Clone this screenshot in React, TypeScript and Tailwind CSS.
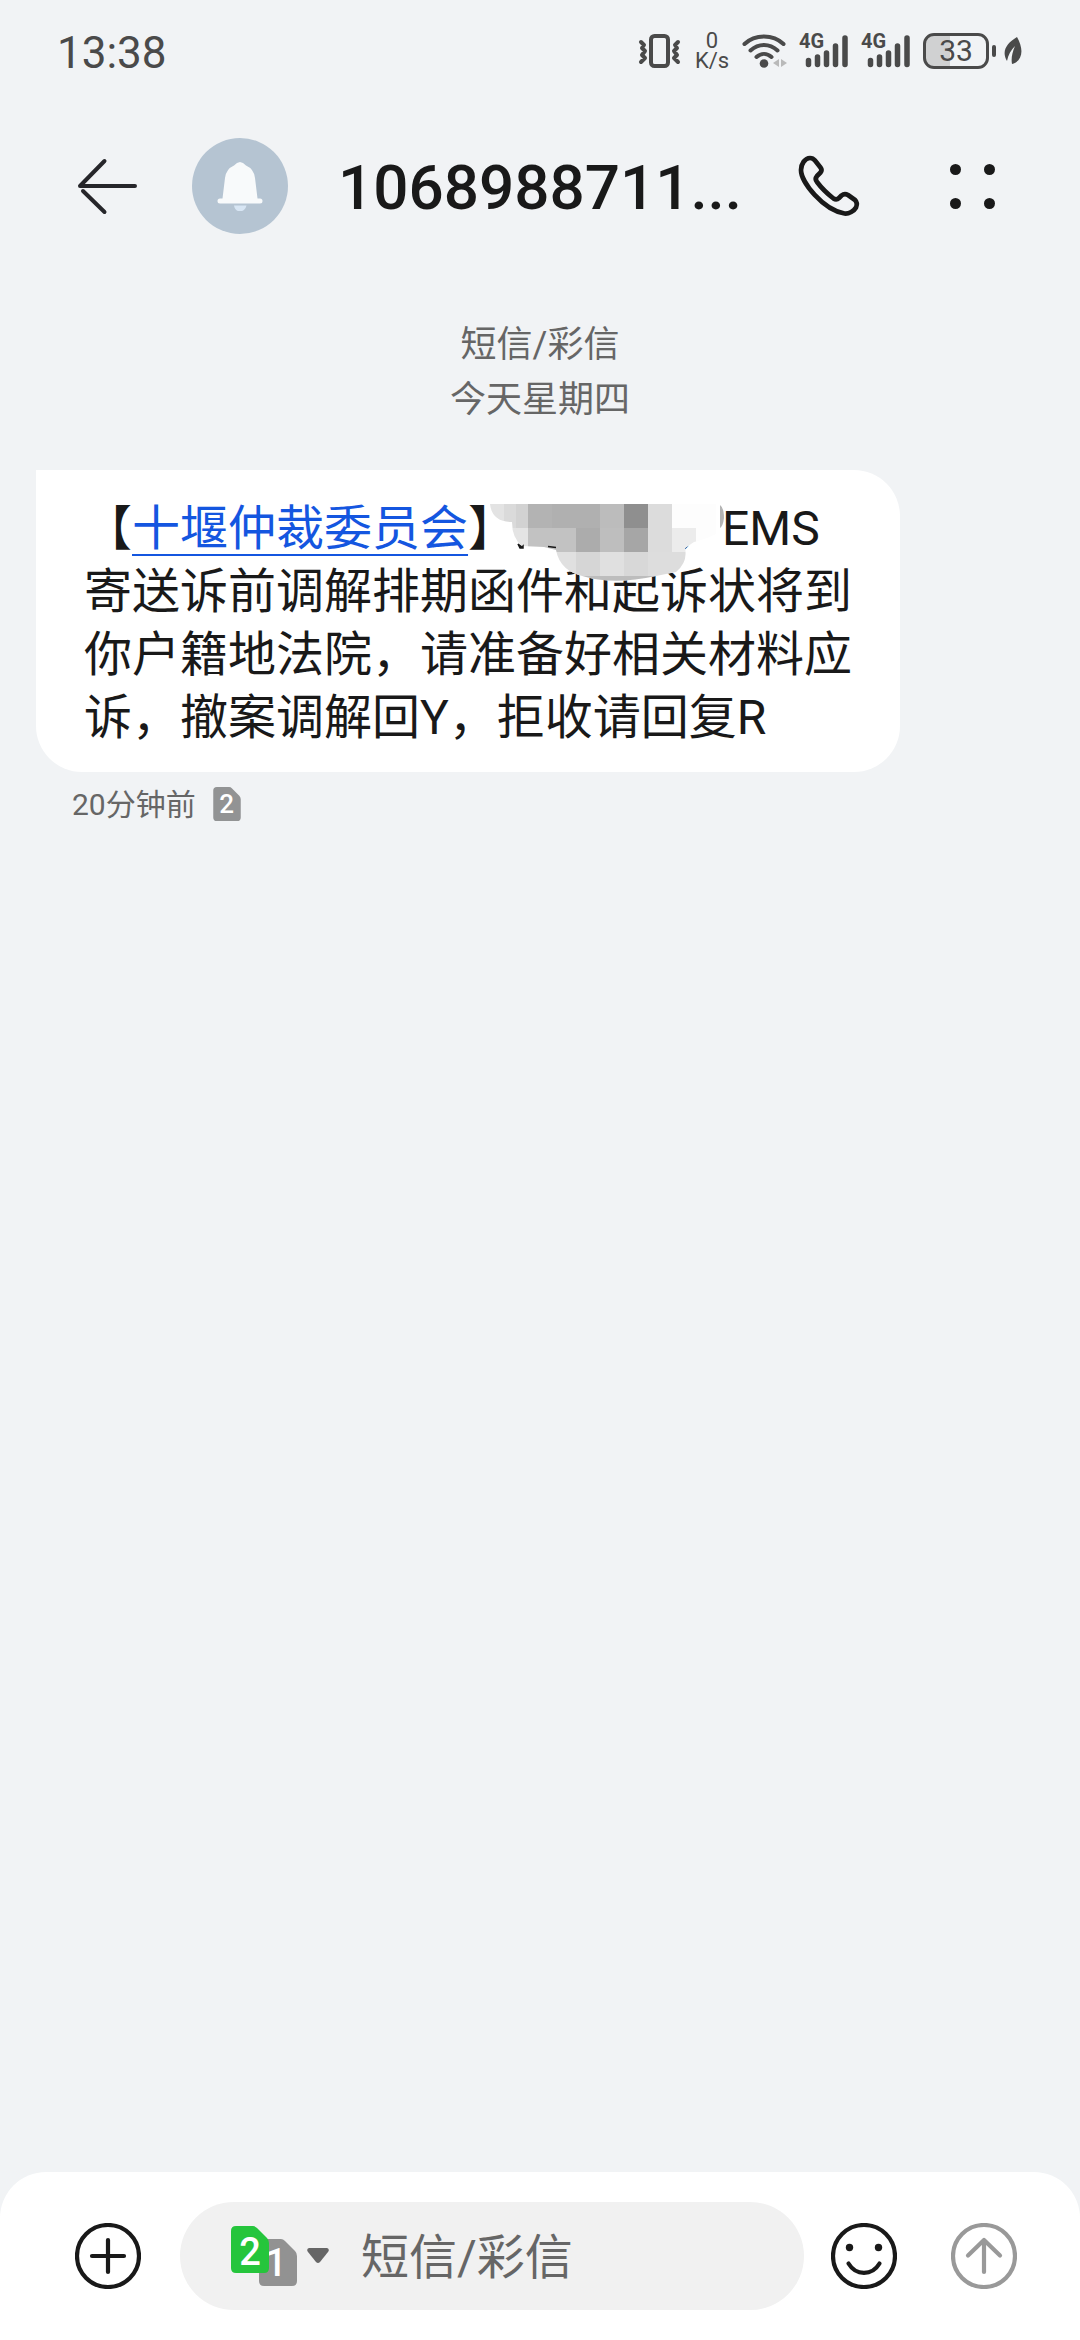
import React from "react";

function StatusIcons() {
  return (
    <div className="flex h-10 items-center text-[#4a4a4a]">
      <svg className="h-10 w-11" viewBox="0 0 44 40" fill="none" stroke="currentColor" role="img" aria-label="振动">
        <rect x="13" y="5" width="17" height="30" rx="3.5" strokeWidth="4" />
        <path d="M3 11l3 3-2 3 3 3-3 4 3 3-4 4M40 11l-3 3 2 3-3 3 3 4-3 3 4 4" strokeWidth="4" strokeLinecap="round" strokeLinejoin="round" />
      </svg>
      <div className="ml-3 flex w-9 flex-col items-center text-[22px] leading-5">
        <span>0</span>
        <span>K/s</span>
      </div>
      <svg className="ml-3 h-10 w-[45px]" viewBox="0 0 45 40" fill="none" stroke="currentColor" strokeWidth="4" strokeLinecap="round" role="img" aria-label="无线网络">
        <path d="M2.500 13C13 3 31 3 41.500 13M8.500 19.500c8-7.500 19-7.500 27 0M14.500 26c4.500-4 10.500-4 15 0" />
        <circle cx="22" cy="32.500" r="4.300" fill="currentColor" stroke="none" />
        <path d="M37 28v8l-6-4zM39 28v8l6-4z" fill="#b9b9b9" stroke="none" />
      </svg>
      <Signal />
      <Signal />
      <div className="ml-3 flex items-center">
        <div className="flex h-9 w-[66px] items-center justify-center rounded-[11px] border-[3px] border-[#4a4a4a] bg-linear-to-r from-[#d0d1d2] from-40% to-transparent to-40% text-[30px] leading-8">
          33
        </div>
        <div className="ml-[3px] h-3 w-1 rounded-full bg-[#4a4a4a]" />
      </div>
      <svg className="ml-2 h-8 w-[18px]" viewBox="0 0 18 32" role="img" aria-label="省电">
        <path d="M13 2C3 8-3 16 3 26 4 20 7 15 11 11 8 18 7 24 8 29 19 26 20 14 13 2z" fill="currentColor" />
      </svg>
    </div>
  );
}

function Signal() {
  return (
    <div className="relative ml-3 h-10 w-[50px]">
      <svg className="h-10 w-[50px]" viewBox="0 0 50 40" stroke="currentColor" strokeWidth="5.500" strokeLinecap="round" role="img" aria-label="信号">
        <path d="M9.500 29.500v4M18.500 26v7.500M27.500 22v11.500M36.500 15v18.500M46 7v26.500" />
      </svg>
      <span className="absolute top-0 left-0 text-[20px] leading-5 font-bold">4G</span>
    </div>
  );
}

function CardShape({ className }: { className: string }) {
  return (
    <svg className={className} viewBox="0 0 38 47" aria-hidden="true">
      <path d="M5 0H22Q24 0 26 2L36 12Q38 14 38 17V42Q38 47 33 47H5Q0 47 0 42V5Q0 0 5 0z" fill="currentColor" />
    </svg>
  );
}

const TILES: [number, number, number, number, string][] = [
  [0, 14, 24, 24, "#e3e3e3"],
  [24, 14, 12, 24, "#dadada"],
  [36, 14, 12, 24, "#d2d2d2"],
  [48, 14, 24, 24, "#b3b3b3"],
  [72, 14, 48, 24, "#b0b0b0"],
  [120, 14, 24, 24, "#bcbcbc"],
  [144, 14, 24, 24, "#8f8f8f"],
  [168, 14, 24, 24, "#dcdcdc"],
  [24, 38, 24, 24, "#e4e4e4"],
  [48, 38, 48, 24, "#c2c2c2"],
  [96, 38, 24, 24, "#acacac"],
  [120, 38, 24, 24, "#bebebe"],
  [144, 38, 24, 24, "#a6a6a6"],
  [168, 38, 24, 24, "#dcdcdc"],
  [192, 38, 24, 24, "#ececec"],
  [72, 62, 24, 24, "#e0e0e0"],
  [96, 62, 24, 24, "#d6d6d6"],
  [120, 62, 24, 24, "#e0e0e0"],
  [144, 62, 24, 24, "#d8d8d8"],
  [168, 62, 42, 24, "#dddddd"],
  [84, 86, 110, 8, "#bdbdbd"],
];

function Mosaic() {
  return (
    <svg className="absolute -top-[7px] left-[396px] h-[96px] w-[248px]" viewBox="0 0 248 96" aria-hidden="true">
      <defs>
        <clipPath id="brush">
          <path d="M10 14H236V44Q224 50 214 52L205 58Q208 72 196 82L176 86Q135 95 106 87Q80 82 76 60L64 57L42 56Q32 48 32 32Q12 32 10 14z" />
        </clipPath>
      </defs>
      <g clipPath="url(#brush)">
        <rect width="248" height="96" fill="#fdfdfd" />
        <g shapeRendering="crispEdges">
          {TILES.map(([x, y, w, h, fill]) => (
            <rect key={`${x}-${y}`} x={x} y={y} width={w} height={h} fill={fill} />
          ))}
        </g>
      </g>
      <path d="M240 15Q244 18 244 28Q243 36 240 38z" fill="#b4b4b4" />
      <path d="M38 54l4 3 1-1 0 2-3 0zM68 56.500l8 1" stroke="#191919" strokeWidth="1.500" />
    </svg>
  );
}

export default function App() {
  return (
    <div className="flex min-h-screen flex-col bg-[#f1f3f5] font-[Roboto,'Noto_Sans_CJK_SC',sans-serif] text-[#191919]">
      <div className="flex h-[102px] items-center justify-between pr-[58px] pl-[57px]">
        <span className="pt-1 text-[44px] leading-none text-[#4a4a4a]">13:38</span>
        <StatusIcons />
      </div>

      <header className="flex h-[168px] items-center pr-[85px] pl-[77px]">
        <button type="button" aria-label="返回">
          <svg className="h-[60px] w-[60px]" viewBox="0 0 60 60" fill="none" stroke="#26262a" strokeWidth="4" strokeLinecap="round" strokeLinejoin="round" aria-hidden="true">
            <path d="M58 30H3L27.500 5M6 35l21.500 21" />
          </svg>
        </button>
        <div className="ml-[55px] flex size-24 items-center justify-center rounded-full bg-[#b5c4d2]">
          <svg className="h-[50px] w-[46px]" viewBox="0 0 46 50" aria-hidden="true">
            <path d="M3 37.500H5.500L8 17Q9 8 17 4.500Q20 1 23 1Q26 1 29 4.500Q37 8 38 17L40.500 37.500H43a2.500 2.500 0 0 1 0 5H3a2.500 2.500 0 0 1 0-5z" fill="#f8fafb" />
            <path d="M17 44.500H29.500Q28 50 23 50.500Q18 50 17 44.500z" fill="#d8e6f4" />
          </svg>
        </div>
        <h1 className="ml-[50px] min-w-0 flex-1 truncate pt-1 text-[62px] leading-[80px] font-medium">1068988711...</h1>
        <button type="button" aria-label="拨打电话">
          <svg className="h-[64px] w-[64px]" viewBox="16 14 64 64" fill="none" stroke="currentColor" strokeWidth="4.700" strokeLinejoin="round" aria-hidden="true">
            <path d="M20 30C20 24 24 18 29 18Q32 18 34 20.500L39.500 27.500Q41.500 30 39.500 32.500L36 36Q33.500 39 36 42C42 50 48 55 52.500 58.500Q55.500 60.500 58 58L60.500 55.500Q63.500 53 67 55L74 60Q77 63 75 67.500C73 71 68 74 63.500 73.500C42 70 20 42 20 30z" />
          </svg>
        </button>
        <button type="button" aria-label="更多" className="ml-[89px] grid grid-cols-2 gap-[23px]">
          <span className="size-[11px] rounded-full bg-[#191919]" />
          <span className="size-[11px] rounded-full bg-[#191919]" />
          <span className="size-[11px] rounded-full bg-[#191919]" />
          <span className="size-[11px] rounded-full bg-[#191919]" />
        </button>
      </header>

      <main className="flex-1 px-9 pt-12">
        <div className="text-center text-[36px] leading-[55px] text-[#666666]">
          <p>短信/彩信</p>
          <p>今天星期四</p>
        </div>
        <article className="mt-[42px] w-[864px] max-w-full rounded-[46px] rounded-tl-none bg-white px-12 pt-[27px] pb-[23px]">
          <p className="relative text-[48px] leading-[63px]">
            【
            <a href="#sender" className="text-[#1456e0] underline decoration-2 underline-offset-[9px]">十堰仲裁委员会</a>
            】<span className="inline-block w-[158px]" />，EMS寄送诉前调解排期函件和起诉状将到你户籍地法院，请准备好相关材料应诉，撤案调解回Y，拒收请回复R
            <Mosaic />
          </p>
        </article>
        <div className="mt-2 flex h-12 items-center pl-9 text-[30px] text-[#666666]">
          <time>20分钟前</time>
          <span className="relative ml-[17px] flex h-[34px] w-7 items-center justify-center text-[26px] leading-none font-medium text-white">
            <CardShape className="absolute inset-0 size-full text-[#929394]" />
            <span className="relative">2</span>
          </span>
        </div>
      </main>

      <footer className="flex items-center rounded-t-[46px] bg-white py-[30px] pr-[63px] pl-[75px]">
        <button type="button" aria-label="添加">
          <svg className="size-[66px]" viewBox="0 0 66 66" fill="none" stroke="currentColor" strokeWidth="4.200" strokeLinecap="round" aria-hidden="true">
            <circle cx="33" cy="33" r="31" />
            <path d="M33 17v32M17 33h32" />
          </svg>
        </button>
        <div className="mr-[27px] ml-[39px] flex h-[108px] min-w-0 flex-1 items-center rounded-full bg-[#f1f1f1] pr-12 pl-[51px]">
          <button type="button" aria-label="选择发送卡" className="flex items-center">
            <span className="relative block h-[60px] w-[66px]">
              <span className="absolute right-0 bottom-0 flex h-[47px] w-[38px] items-center justify-center">
                <CardShape className="absolute inset-0 size-full text-[#929292]" />
                <span className="relative pr-1 text-[38px] leading-none font-medium text-white">1</span>
              </span>
              <span className="absolute top-0 left-0 flex h-[47px] w-[38px] items-center justify-center">
                <CardShape className="absolute inset-0 size-full text-[#25c53c]" />
                <span className="relative pt-1 text-[38px] leading-none font-medium text-white">2</span>
              </span>
            </span>
            <svg className="ml-[10px] h-4 w-[22px]" viewBox="0 0 22 16" aria-hidden="true">
              <path d="M2 0H20Q23 1 21 4L13 14Q11 16 9 14L1 4Q-1 1 2 0z" fill="#666666" />
            </svg>
          </button>
          <input
            type="text"
            aria-label="短信/彩信"
            placeholder="短信/彩信"
            className="ml-8 h-[72px] min-w-0 flex-1 bg-transparent pt-1 text-[48px] outline-none placeholder:text-[#666666]"
          />
        </div>
        <button type="button" aria-label="表情">
          <svg className="size-[66px]" viewBox="0 0 66 66" fill="none" stroke="currentColor" strokeWidth="4.200" strokeLinecap="round" aria-hidden="true">
            <circle cx="33" cy="33" r="31" />
            <path d="M17.500 40.500C25 53 41 53 48.500 40.500" />
            <circle cx="18.500" cy="24.500" r="3.700" fill="currentColor" stroke="none" />
            <circle cx="47.500" cy="24.500" r="3.700" fill="currentColor" stroke="none" />
          </svg>
        </button>
        <button type="button" aria-label="发送" className="ml-[54px] text-[#999999]">
          <svg className="size-[66px]" viewBox="0 0 66 66" fill="none" stroke="currentColor" strokeWidth="4.200" strokeLinecap="round" strokeLinejoin="round" aria-hidden="true">
            <circle cx="33" cy="33" r="31" />
            <path d="M33 49V17M17 32.500L33 17L49 32.500" />
          </svg>
        </button>
      </footer>
    </div>
  );
}
